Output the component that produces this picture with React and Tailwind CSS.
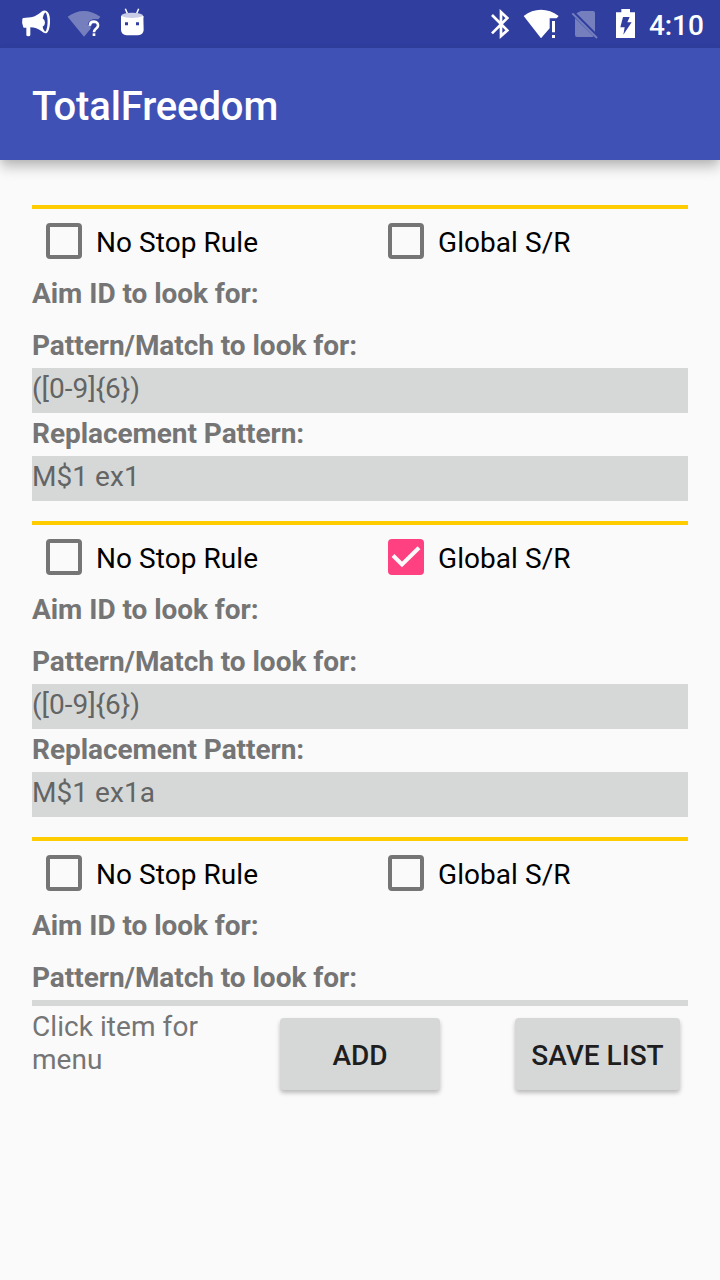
const rules = [
  { global: false, pattern: '([0-9]{6})', replacement: 'M$1 ex1' },
  { global: true, pattern: '([0-9]{6})', replacement: 'M$1 ex1a' },
  { global: false, pattern: '', replacement: '' },
];

function StatusBar() {
  return (
    <div className="flex h-12 shrink-0 items-start bg-[#303f9f] text-white">
      <svg className="h-12 w-[60px]" viewBox="0 0 180 144" fill="currentColor">
        <path d="M70 54L93 52Q112 48 126 34Q130 31 137 32C147 35 151 49 150 68C149 87 144 100 136 100Q130 99 124 93Q110 83 91 82V105Q91 109 85 109Q79 109 79 105V83H72Q69 83 69 78Q65 68 67 56Z" />
        <path d="M134 39Q129 46 128 55Q135 60 135 68Q135 76 128 80Q129 88 134 94Q137 96 139 90C144 76 144 54 139 41Q136 35 134 39Z" fill="#303f9f" />
        <path d="M127 57Q132 61 132 68Q132 74 127 78Z" />
      </svg>
      <svg className="h-12 w-[52px]" viewBox="180 0 156 144" fill="none">
        <path d="M203 50Q251 16 301 50L295 58Q268 53 263 75H272V86L252 110Z" fill="#757fbe" />
        <path d="M270 77Q270 65 282 65Q295 66 294 77Q293 83 287 87Q282 91 282 97" stroke="white" strokeWidth="8" />
        <rect x="278" y="100" width="8" height="8" fill="white" />
      </svg>
      <svg className="h-12 w-10" viewBox="336 0 120 144" fill="currentColor">
        <path d="M376 26L383 43M416 26L409 43" stroke="white" strokeWidth="4.5" />
        <path d="M363 49Q364 38 396 38Q429 38 430 49V55H363Z" fill="#c9cde8" />
        <path d="M363 48Q378 54 396 54Q415 54 430 48L431 90Q430 104 414 106H380Q364 104 363 90Z" />
        <path d="M375 67H384V76H375ZM408 67H417V76H408Z" fill="#303f9f" />
      </svg>
      <div className="flex-1" />
      <svg className="h-12 w-9" viewBox="0 0 108 144" fill="none" stroke="currentColor">
        <path d="M36 45L82 91L63 108V36L82 54L36 100" strokeWidth="8" />
      </svg>
      <svg className="h-12 w-12" viewBox="108 0 144 144" fill="currentColor">
        <path d="M131 48Q155 29 183 29Q211 29 236 48L230 55H209V85L183 115Z" />
        <path d="M216 63H225V97H216ZM216 105H225V114H216Z" />
      </svg>
      <svg className="h-12 w-11" viewBox="252 0 132 144">
        <path d="M303 33H339Q345 33 345 39V96L289 40ZM285 54L341 109Q339 111 337 111H291Q285 111 285 105Z" fill="#757fbe" />
        <path d="M281 36L351 106" stroke="#303f9f" strokeWidth="5" />
        <path d="M277 40L351 114" stroke="#757fbe" strokeWidth="6" />
      </svg>
      <svg className="h-12 w-[41px]" viewBox="384 0 123 144" fill="currentColor">
        <path d="M408 37H424V27H450V37H465V114H408Z" />
        <path d="M429 51H449L442 67H455L430 104L434 82H421Z" fill="#303f9f" />
      </svg>
      <span className="w-[71px] pt-[9px] text-[28px] leading-[33px] font-medium tracking-[-0.1px]">4:10</span>
    </div>
  );
}

function Check({ label, checked = false }) {
  return (
    <label className="flex w-[342px] shrink-0 items-center">
      {checked ? (
        <span className="h-9 w-9 shrink-0 rounded-[4px] bg-[#ff4081]">
          <svg className="h-9 w-9" viewBox="0 0 36 36" fill="none">
            <path d="M5 16.5L14 25.5L31 8.8" stroke="#fafafa" strokeWidth="4" />
          </svg>
        </span>
      ) : (
        <span className="h-9 w-9 shrink-0 rounded-[4px] border-4 border-[#757575]" />
      )}
      <span className="pt-[3px] pl-[14px] tracking-[0.06px] whitespace-nowrap text-black">{label}</span>
    </label>
  );
}

function Rule({ rule }) {
  return (
    <div className="flex h-[316px] shrink-0 flex-col">
      <div className="h-1 shrink-0 bg-[#ffcc00]" />
      <div className="flex h-16 shrink-0 overflow-hidden pl-[14px]">
        <Check label="No Stop Rule" />
        <Check label="Global S/R" checked={rule.global} />
      </div>
      <div className="mt-1 h-[33px] font-bold tracking-[-0.05px]">Aim ID to look for:</div>
      <div className="mt-[19px] h-[33px] font-bold tracking-[-0.05px]">Pattern/Match to look for:</div>
      <div className="mt-[6px] h-[45px] bg-[#d6d8d7] pt-1 text-[#636464]">{rule.pattern}</div>
      {rule.replacement && (
        <>
          <div className="mt-1 h-[33px] font-bold tracking-[-0.05px]">Replacement Pattern:</div>
          <div className="mt-[6px] h-[45px] bg-[#d6d8d7] pt-1 tracking-[0.06px] text-[#636464]">{rule.replacement}</div>
        </>
      )}
    </div>
  );
}

export default function App() {
  return (
    <div className="flex h-[1280px] w-[720px] flex-col overflow-hidden bg-[#fafafa] font-['Roboto',sans-serif] text-[28px] leading-[33px] text-[#757575]">
      <StatusBar />
      <header className="flex h-28 shrink-0 items-center bg-[#3f51b5] px-8 pt-[6px] text-[40px] leading-[48px] font-medium tracking-[-0.13px] text-white shadow-[0_8px_12px_-1px_rgba(0,0,0,0.25),0_1px_6px_rgba(0,0,0,0.06)]">
        TotalFreedom
      </header>
      <main className="px-8 pt-[45px]">
        <div className="flex h-[801px] flex-col overflow-hidden">
          {rules.map((rule, i) => (
            <Rule key={i} rule={rule} />
          ))}
        </div>
        <div className="flex items-start pt-1">
          <p className="w-[248px] pr-12 tracking-[0.06px]">Click item for menu</p>
          <button className="mt-2 h-[72px] w-40 rounded-[4px] bg-[#d6d8d7] pt-[3px] font-medium text-[#1e1e1e] shadow-[0_3px_4px_rgba(0,0,0,0.25)]">
            ADD
          </button>
          <button className="mt-2 ml-[75px] h-[72px] w-[165px] rounded-[4px] bg-[#d6d8d7] pt-[3px] font-medium whitespace-nowrap text-[#1e1e1e] shadow-[0_3px_4px_rgba(0,0,0,0.25)]">
            SAVE LIST
          </button>
        </div>
      </main>
    </div>
  );
}
